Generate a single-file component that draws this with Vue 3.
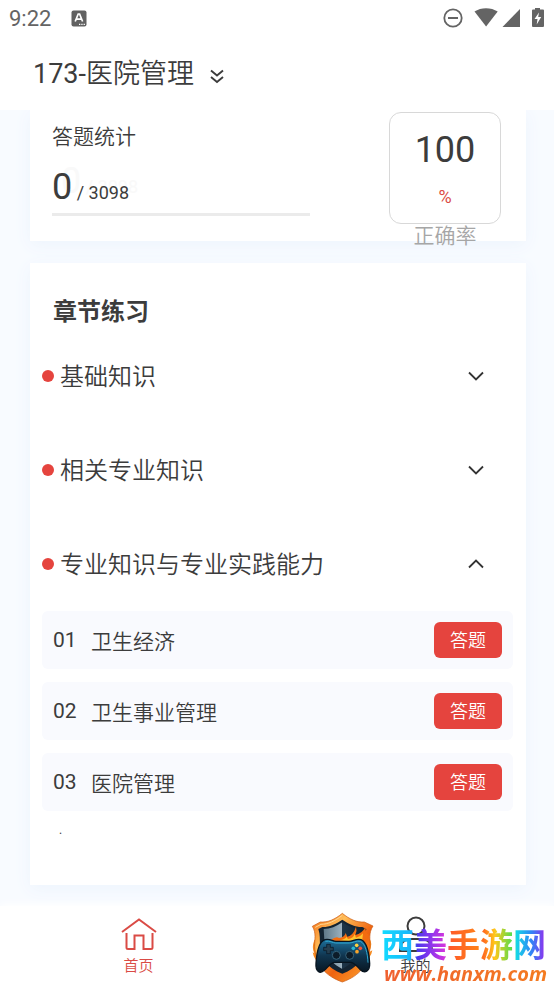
<script setup>
import { ref } from 'vue'

const lessons = ['卫生经济', '卫生事业管理', '医院管理']
const chapters = ['基础知识', '相关专业知识', '专业知识与专业实践能力']
const openIndex = ref(2)

function toggle(i) {
  openIndex.value = openIndex.value === i ? -1 : i
}
</script>

<template>
  <div class="page">
    <header class="top">
      <div class="status">
        <span class="time">9:22</span>
        <svg class="ime" viewBox="0 0 16 17" aria-hidden="true">
          <rect x="0.5" y="0.5" width="15" height="16" rx="2" fill="#616161" />
          <path d="M4.2 11.5 7.2 4h1.4l3 7.500M5.600 9.200h4.600" fill="none" stroke="#fff" stroke-width="1.700" />
          <path d="M8 14.400h1.300M10.300 14.400h1.300M12.600 14.400h1.300" stroke="#fff" stroke-width="1.200" />
        </svg>
        <svg class="tray" viewBox="0 0 102 22" aria-hidden="true">
          <g fill="#646464">
            <circle cx="10" cy="11" r="8.700" fill="none" stroke="#646464" stroke-width="1.800" />
            <path d="M5 10h10v2H5z" />
            <path d="M31.500 4.500C38 0 48 0 54.700 4.500L43.100 19.500z" />
            <path d="M59.500 20 77 2v18z" />
            <path d="M89 3.500q0-1 1-1h2V1h5v1.500h3q1 0 1 1V19q0 1-1 1H90q-1 0-1-1z" />
          </g>
          <path d="M96 5.500 91.500 12h3l-.8 5.500L98.200 10h-3z" fill="#fff" />
        </svg>
      </div>
      <button class="course" type="button">
        <span>173-<span class="cjk">医院管理</span></span>
        <svg viewBox="0 0 14 15" aria-hidden="true">
          <path d="m1 1.500 6 5 6-5M1 8l6 5 6-5" fill="none" stroke="#3c3c3c" stroke-width="1.900" />
        </svg>
      </button>
    </header>

    <main class="content">
      <section class="card stats">
        <div class="progress">
          <h2>答题统计</h2>
          <p class="count">
            <span class="ghost" aria-hidden="true"><b>0</b> / 3098</span>
            <span class="value"><b>0</b> / 3098</span>
          </p>
          <div class="track" role="progressbar" aria-label="答题统计" aria-valuenow="0" aria-valuemax="3098"></div>
        </div>
        <div class="score">
          <div class="box">
            <strong>100</strong>
            <span>%</span>
          </div>
          <p>正确率</p>
        </div>
      </section>

      <section class="card practice">
        <h2>章节练习</h2>
        <template v-for="(name, i) in chapters" :key="name">
          <button class="chapter" type="button" :aria-expanded="openIndex === i" @click="toggle(i)">
            <i class="dot"></i>
            <span>{{ name }}</span>
            <svg :class="{ up: openIndex === i }" viewBox="0 0 16 10" aria-hidden="true">
              <path d="m1 1.500 7 7 7-7" fill="none" stroke="#333" stroke-width="1.800" />
            </svg>
          </button>
          <ul v-if="openIndex === i" class="lessons">
            <li v-for="(lesson, n) in lessons" :key="lesson">
              <span class="num">0{{ n + 1 }}</span>
              <span class="name">{{ lesson }}</span>
              <button type="button">答题</button>
            </li>
          </ul>
        </template>
        <p class="tail">.</p>
      </section>
    </main>

    <nav class="tabs">
      <a class="active" href="#home">
        <svg viewBox="0 0 36 38" aria-hidden="true">
          <path d="M1 16 18 3.500 35 16M5.500 17v14.500q0 1.500 1.500 1.500h6.500V19.500h9V33H30q1.500 0 1.500-1.500V17" fill="none" stroke="#da4b45" stroke-width="2" />
        </svg>
        <span>首页</span>
      </a>
      <a href="#me">
        <svg viewBox="0 0 36 38" aria-hidden="true">
          <circle cx="18" cy="10" r="8.500" fill="none" stroke="#3c3c3c" stroke-width="2" />
          <path d="M2 35q0-12 12-12h8q12 0 12 12z" fill="none" stroke="#3c3c3c" stroke-width="2" />
        </svg>
        <span>我的</span>
      </a>
      <div class="brand">
        <svg viewBox="0 0 225 237" aria-hidden="true">
          <defs>
            <linearGradient id="rim" x1="0" y1="0" x2="1" y2="1">
              <stop offset="0" stop-color="#f36a12" />
              <stop offset=".3" stop-color="#ffbd58" />
              <stop offset=".6" stop-color="#ef6310" />
              <stop offset="1" stop-color="#ffae32" />
            </linearGradient>
            <linearGradient id="steel" x1="0" y1="0" x2="1" y2="0">
              <stop offset="0" stop-color="#607989" />
              <stop offset=".48" stop-color="#9bb0bd" />
              <stop offset=".5" stop-color="#1d3548" />
              <stop offset="1" stop-color="#132433" />
            </linearGradient>
            <linearGradient id="pad" x1="0" y1="0" x2="0" y2="1">
              <stop offset="0" stop-color="#1d709c" />
              <stop offset=".5" stop-color="#10354f" />
              <stop offset="1" stop-color="#081723" />
            </linearGradient>
          </defs>
          <path d="M28 105q-9 24 0 40l-5-3q4 22 22 36l130-4q24-17 27-38l-10 6q14-26 0-43z" fill="#f58a20" />
          <path d="M112 25c-22 18-44 28-66 26L22 64c13 21 6 39 7 60 2 54 31 89 83 107 52-18 81-53 83-107 1-21-5-39 9-61l-26-12c-22 2-44-8-66-26z" fill="url(#rim)" stroke="#c8560f" stroke-width="2" />
          <path d="M112 31c-22 17-43 27-64 27l-17 9" fill="none" stroke="#ffd995" stroke-width="3" />
          <path d="M112 44c-20 14-42 23-60 22l-12 6c6 17 4 33 5 50 2 41 22 66 67 84 45-18 65-43 67-84 1-17-1-33 5-50l-12-6c-18 1-40-8-60-22z" fill="#142432" />
          <path d="M112 52c-18 13-36 20-56 20 4 57 0 90 56 120 56-30 52-63 56-120-20 0-38-7-56-20z" fill="url(#steel)" />
          <path d="M77 106q16-13 25-7 16-1 20-15l5 11q18-4 26-30 4 13-2 25 20-4 31-25-2 17 8 23-4 22-16 32z" fill="#f36c10" />
          <path d="M104 106q16-3 21-11l4 7q16-2 20-15l4 11q14-3 21-13l-3 27z" fill="#ffc52f" />
          <path d="M60 104c14-4 23 5 33 5h39c12 0 22-9 36-5 18 7 25 43 26 71 1 25-15 31-28 19-10-10-17-20-28-22H88c-12 2-20 15-30 24-13 12-27 4-25-21 2-31 9-65 27-71z" fill="url(#pad)" stroke="#07141f" stroke-width="4" />
          <path d="M61 109c14-3 22 5 31 5h41c11 0 20-8 33-5 15 6 22 37 23 64" fill="none" stroke="#2fa9d0" stroke-width="3" />
          <path d="M65 118h11v9h9v10h-9v9H65v-9h-9v-10h9z" fill="#263f50" stroke="#071522" stroke-width="2" />
          <g fill="#0c1c29" stroke="#35647c" stroke-width="3">
            <circle cx="94" cy="151" r="12" />
            <circle cx="134" cy="151" r="12" />
          </g>
          <circle cx="155" cy="121" r="5.500" fill="#ffd33e" />
          <circle cx="145" cy="130" r="5.500" fill="#29b8d2" />
          <circle cx="166" cy="130" r="5.500" fill="#f15336" />
          <circle cx="156" cy="140" r="5.500" fill="#f7a52c" />
        </svg>
        <div class="words">
          <strong>西美手游网</strong>
          <em>www.hanxm.com</em>
        </div>
      </div>
    </nav>
  </div>
</template>

<style>
body {
  margin: 0;
  background: #fff;
}
</style>

<style scoped>
.page {
  display: flex;
  flex-direction: column;
  min-height: 100vh;
  color: #3c3c3c;
  font-family: Roboto, "Noto Sans CJK SC", sans-serif;
  font-weight: 400;
}
h2,
p,
ul {
  margin: 0;
  padding: 0;
}
button {
  border: 0;
  padding: 0;
  color: inherit;
  font: inherit;
  background: none;
  cursor: pointer;
}
.cjk {
  font-weight: 350;
}
.top {
  position: relative;
  height: 110px;
  background: #fff;
}
.status {
  display: flex;
  align-items: center;
  height: 36px;
  padding: 0 9px;
  color: #646464;
  font-size: 22px;
}
.ime {
  width: 16px;
  height: 17px;
  margin-left: 20px;
}
.tray {
  width: 102px;
  height: 22px;
  margin-left: auto;
}
.course {
  display: flex;
  align-items: center;
  gap: 16px;
  height: 70px;
  margin-left: 33px;
  font-size: 27px;
}
.course svg {
  width: 14px;
  height: 15px;
  margin-top: 10px;
}
.content {
  display: flex;
  flex: 1;
  flex-direction: column;
  gap: 22px;
  padding: 0 28px 21px 30px;
  background: #f8fbff;
}
.card {
  background: #fff;
  box-shadow: 0 4px 16px #edf4fd;
}
.top,
.tabs {
  z-index: 1;
}
.stats {
  display: grid;
  grid-template-columns: 1fr 112px;
  gap: 79px;
  padding: 2px 25px 17px 22px;
}
.progress h2 {
  padding-top: 9px;
  font-size: 21px;
  font-weight: 350;
  line-height: 32px;
}
.count {
  position: relative;
  height: 60px;
  font-size: 18px;
  line-height: 68px;
}
.count b {
  font-size: 36px;
  font-weight: 400;
}
.value {
  position: relative;
}
.ghost {
  position: absolute;
  top: -6px;
  left: 9px;
  color: #f9f9f9;
}
.track {
  height: 3px;
  background: #ebebeb;
}
.score {
  height: 112px;
  text-align: center;
}
.box {
  display: flex;
  flex-direction: column;
  align-items: center;
  box-sizing: border-box;
  height: 112px;
  padding-top: 14px;
  border: 1px solid #d8d8d8;
  border-radius: 12px;
}
.box strong {
  font-size: 36px;
  font-weight: 400;
  line-height: 46px;
}
.box span {
  color: #da4b45;
  font-size: 18px;
  line-height: 48px;
}
.score p {
  color: #a6a6a6;
  font-size: 21px;
  font-weight: 350;
  line-height: 24px;
}
.practice {
  display: flex;
  flex: 1;
  flex-direction: column;
  padding: 33px 13px 0 12px;
}
.practice h2 {
  padding-left: 11px;
  font-size: 24px;
  font-weight: 700;
  line-height: 33px;
}
.chapter {
  display: flex;
  align-items: center;
  height: 94px;
  padding-right: 29px;
  font-size: 24px;
  font-weight: 350;
  line-height: 34px;
}
.chapter span {
  padding-top: 2px;
}
.dot {
  width: 12px;
  height: 12px;
  margin-right: 6px;
  border-radius: 50%;
  background: #e5443e;
}
.chapter svg {
  width: 16px;
  height: 10px;
  margin-left: auto;
}
.chapter .up {
  transform: rotate(180deg);
}
.lessons {
  display: grid;
  gap: 13px;
  list-style: none;
}
.lessons li {
  display: flex;
  align-items: center;
  height: 58px;
  padding: 0 11px;
  border-radius: 6px;
  background: #f9fafe;
  font-size: 21px;
}
.num {
  width: 38px;
}
.name {
  font-weight: 350;
}
.lessons button {
  width: 68px;
  height: 36px;
  padding-bottom: 3px;
  margin-left: auto;
  border-radius: 6px;
  background: #e5443e;
  color: #fff;
  font-size: 18px;
  font-weight: 350;
}
.tail {
  padding: 12px 17px 0;
  font-size: 12px;
}
.tabs {
  position: relative;
  display: grid;
  grid-template-columns: 1fr 1fr;
  height: 78px;
  background: #fff;
  box-shadow: 0 -2px 8px #fff;
}
.tabs a {
  display: flex;
  flex-direction: column;
  align-items: center;
  padding-top: 10px;
  color: #3c3c3c;
  font-size: 15px;
  font-weight: 350;
  line-height: 20px;
  text-decoration: none;
}
.tabs a svg {
  width: 36px;
  height: 38px;
  margin-bottom: 2px;
}
.tabs .active {
  color: #da4b45;
}
.brand {
  position: absolute;
  right: 7px;
  bottom: 0;
  display: flex;
  align-items: flex-end;
  pointer-events: none;
}
.brand svg {
  width: 75px;
  height: 79px;
}
.words {
  display: flex;
  flex-direction: column;
  width: 167px;
}
.words strong,
.words em {
  color: transparent;
  -webkit-background-clip: text;
  background-clip: text;
  white-space: nowrap;
}
.words strong {
  align-self: center;
  background-image: linear-gradient(90deg, #12dcff 0%, #18b4fa 19%, #4a38ea 22%, #8b35ee 30%, #d634dc 39%, #ff5a28 42%, #ff8418 60%, #ff6a20 62%, #ffc81a 69%, #5cdc4a 79%, #14d8e6 82%, #2f86f6 91%, #8c34ee 99%);
  font-size: 33px;
  font-weight: 700;
  line-height: 36px;
}
.words em {
  align-self: flex-end;
  background-image: linear-gradient(90deg, #ef6030, #f47b20);
  font-family: "Open Sans", sans-serif;
  font-size: 20px;
  font-weight: 700;
  line-height: 20px;
}
</style>
